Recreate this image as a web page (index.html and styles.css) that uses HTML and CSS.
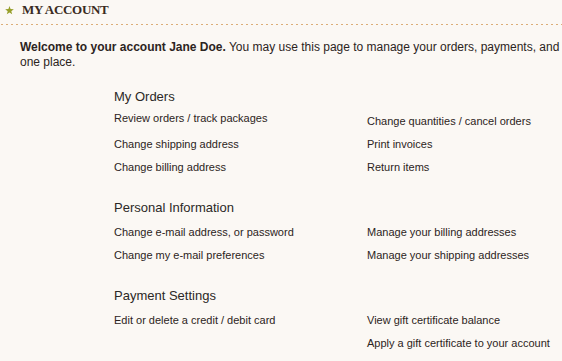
FILE: index.html
```html
<!DOCTYPE html>
<html lang="en">
<head>
  <meta charset="UTF-8">
  <title>My Account</title>
  <link rel="stylesheet" href="styles.css">
</head>
<body>

  <div class="page-title">
    <svg class="star" width="9" height="9" viewBox="0 0 10 10">
      <polygon points="5,0 6.2,3.4 9.8,3.5 7,5.7 8,9.3 5,7.2 2,9.3 3,5.7 0.2,3.5 3.8,3.4" fill="#979f2a"/>
    </svg>
    <h1>My Account</h1>
  </div>

  <p class="welcome">
    <b>Welcome to your account Jane Doe.</b> You may use this page to manage your orders, payments, and account settings, all in one place.
  </p>

  <div class="sections">

    <div class="section">
      <h2>My Orders</h2>
      <div class="links">
        <ul class="raised">
          <li><a href="#">Review orders / track packages</a></li>
          <li><a href="#">Change shipping address</a></li>
          <li><a href="#">Change billing address</a></li>
        </ul>
        <ul>
          <li><a href="#">Change quantities / cancel orders</a></li>
          <li><a href="#">Print invoices</a></li>
          <li><a href="#">Return items</a></li>
        </ul>
      </div>
    </div>

    <div class="section">
      <h2>Personal Information</h2>
      <div class="links">
        <ul>
          <li><a href="#">Change e-mail address, or password</a></li>
          <li><a href="#">Change my e-mail preferences</a></li>
        </ul>
        <ul>
          <li><a href="#">Manage your billing addresses</a></li>
          <li><a href="#">Manage your shipping addresses</a></li>
        </ul>
      </div>
    </div>

    <div class="section">
      <h2>Payment Settings</h2>
      <div class="links">
        <ul>
          <li><a href="#">Edit or delete a credit / debit card</a></li>
        </ul>
        <ul>
          <li><a href="#">View gift certificate balance</a></li>
          <li><a href="#">Apply a gift certificate to your account</a></li>
        </ul>
      </div>
    </div>

  </div>

</body>
</html>
```

FILE: styles.css
```css
body {
  margin: 0;
  background-color: #fbf8f4;
  font-family: "Liberation Sans", Arial, sans-serif;
  color: #2c2422;
  overflow: hidden;
}

.page-title {
  display: flex;
  align-items: center;
  height: 24px;
  padding-left: 5px;
  padding-bottom: 1px;
  background-image: linear-gradient(to right, #dcae78 2px, transparent 2px);
  background-size: 5px 1px;
  background-repeat: repeat-x;
  background-position: 1px 24px;
}

.star {
  margin-right: 8px;
  margin-top: -4px;
}

.page-title h1 {
  margin: -4px 0 0 0;
  font-family: "Liberation Serif", serif;
  font-size: 13px;
  font-weight: bold;
  letter-spacing: -0.3px;
  text-transform: uppercase;
  color: #3a2b22;
}

/* the sentence runs on past the window edge, like the original */
.welcome {
  margin: 15px 0 0 20px;
  width: 678px;
  font-size: 12px;
  line-height: 15px;
}

.sections {
  margin: 19px 0 0 114px;
}

.section {
  margin-bottom: 21px;
}

.section h2 {
  margin: 0;
  font-size: 13px;
  font-weight: normal;
  line-height: 16px;
  color: #2b2826;
}

.links {
  display: grid;
  grid-template-columns: 253px 1fr;
  margin-top: 5px;
}

.links ul {
  list-style: none;
  margin: 0;
  padding: 0;
}

.links li {
  font-size: 11px;
  line-height: 23px;
  white-space: nowrap;
}

.links ul.raised li:first-child {
  margin: -3px 0 3px 0;
}

.links a {
  color: #2c2422;
  text-decoration: none;
}
```
